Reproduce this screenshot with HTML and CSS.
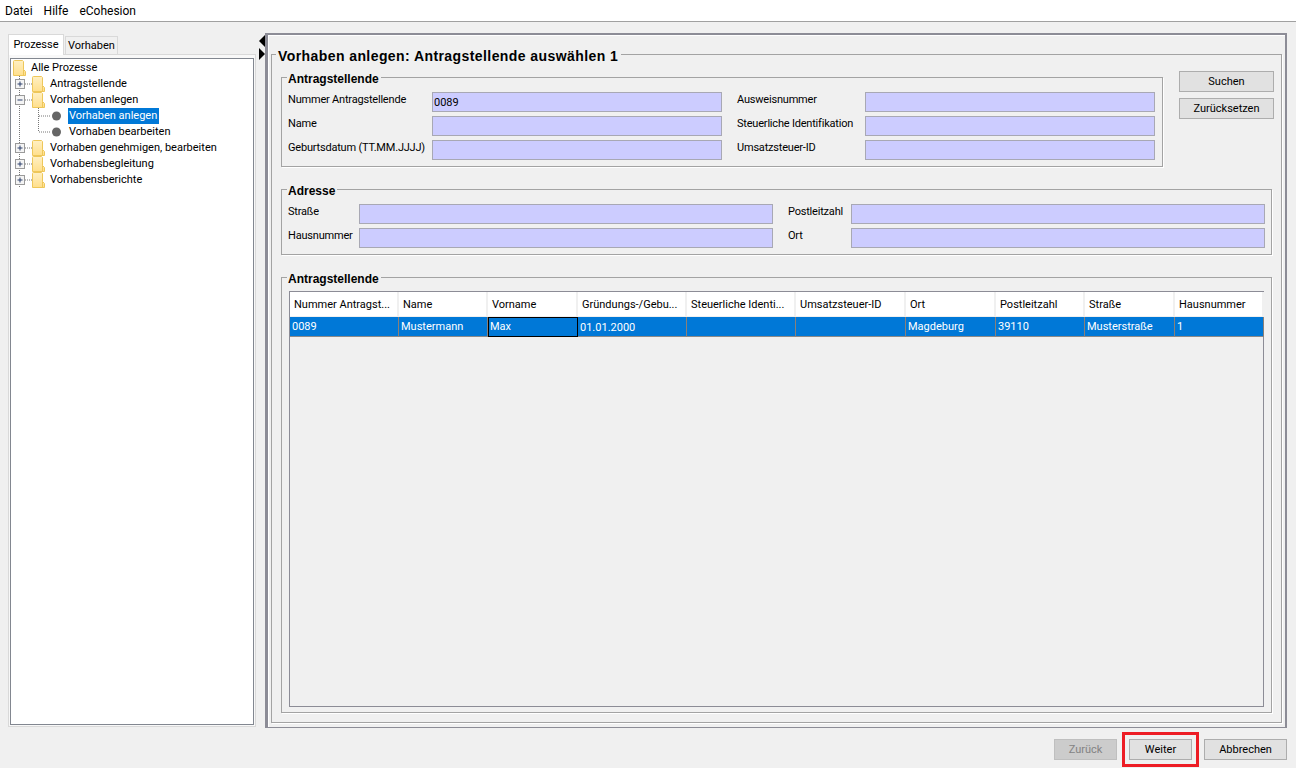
FILE: index.html
```html
<!DOCTYPE html>
<html lang="de">
  <head>
    <meta charset="UTF-8" />
    <meta name="viewport" content="width=device-width, initial-scale=1.0" />
    <title>eCohesion</title>
    <link rel="stylesheet" href="styles.css">
  </head>
  <body>
    <svg class="defs" width="0" height="0">
      <defs>
        <linearGradient id="folder-fill" x1="0" y1="0" x2="0" y2="1">
          <stop offset="0" stop-color="#fff0c4" />
          <stop offset="1" stop-color="#ffdf8c" />
        </linearGradient>
        <symbol id="folder" viewBox="0 0 13 16">
          <path d="M.5 1.5q0-1 1-1h8l1 1v8l2 2v4H.5z" fill="url(#folder-fill)" stroke="#eec75a" />
          <path d="M10.5 9.5v6" stroke="#eec75a" fill="none" />
        </symbol>
        <symbol id="plus" viewBox="0 0 21 16">
          <path d="M8.5 0v16M14 8h7" stroke="#777" stroke-dasharray="1 1" fill="none" />
          <rect x="4.5" y="3.5" width="9" height="9" fill="#f4f4f4" stroke="#9a9a9a" />
          <path d="M6.5 8h5M9 5.5v5" stroke="#2b3f6b" fill="none" />
        </symbol>
        <symbol id="minus" viewBox="0 0 21 16">
          <path d="M8.5 0v16M14 8h7" stroke="#777" stroke-dasharray="1 1" fill="none" />
          <rect x="4.5" y="3.5" width="9" height="9" fill="#f4f4f4" stroke="#9a9a9a" />
          <path d="M6.5 8h5" stroke="#2b3f6b" fill="none" />
        </symbol>
        <symbol id="leaf-mid" viewBox="0 0 52 16">
          <path d="M8.5 0v16M27.5 0v16M28 8h12" stroke="#777" stroke-dasharray="1 1" fill="none" />
          <circle cx="45.5" cy="8" r="4.5" fill="#666" />
        </symbol>
        <symbol id="leaf-end" viewBox="0 0 52 16">
          <path d="M8.5 0v16M27.5 0v8M28 8h12" stroke="#777" stroke-dasharray="1 1" fill="none" />
          <circle cx="45.5" cy="8" r="4.5" fill="#666" />
        </symbol>
      </defs>
    </svg>

    <div class="menubar">
      <span>Datei</span>
      <span>Hilfe</span>
      <span>eCohesion</span>
    </div>

    <div class="main">
      <div class="left-pane">
        <div class="tabs">
          <div class="tab tab-active">Prozesse</div>
          <div class="tab">Vorhaben</div>
        </div>
        <div class="tab-body">
          <div class="tree">
            <div class="tree-row tree-root">
              <svg class="folder"><use href="#folder" /></svg>
              <span class="tree-label">Alle Prozesse</span>
            </div>
            <div class="tree-row">
              <svg class="twisty"><use href="#plus" /></svg>
              <svg class="folder"><use href="#folder" /></svg>
              <span class="tree-label">Antragstellende</span>
            </div>
            <div class="tree-row">
              <svg class="twisty"><use href="#minus" /></svg>
              <svg class="folder"><use href="#folder" /></svg>
              <span class="tree-label">Vorhaben anlegen</span>
            </div>
            <div class="tree-row">
              <svg class="leaf"><use href="#leaf-mid" /></svg>
              <span class="tree-label tree-selected">Vorhaben anlegen</span>
            </div>
            <div class="tree-row">
              <svg class="leaf"><use href="#leaf-end" /></svg>
              <span class="tree-label">Vorhaben bearbeiten</span>
            </div>
            <div class="tree-row">
              <svg class="twisty"><use href="#plus" /></svg>
              <svg class="folder"><use href="#folder" /></svg>
              <span class="tree-label">Vorhaben genehmigen, bearbeiten</span>
            </div>
            <div class="tree-row">
              <svg class="twisty"><use href="#plus" /></svg>
              <svg class="folder"><use href="#folder" /></svg>
              <span class="tree-label">Vorhabensbegleitung</span>
            </div>
            <div class="tree-row">
              <svg class="twisty"><use href="#plus" /></svg>
              <svg class="folder"><use href="#folder" /></svg>
              <span class="tree-label">Vorhabensberichte</span>
            </div>
          </div>
        </div>
      </div>

      <div class="splitter">
        <div class="arrow-left"></div>
        <div class="arrow-right"></div>
      </div>

      <div class="panel">
        <div class="step">
          <div class="step-title">Vorhaben anlegen: Antragstellende auswählen 1</div>

          <div class="search-row">
            <div class="group group-search">
              <div class="group-title">Antragstellende</div>
              <div class="form-grid">
                <label>Nummer Antragstellende</label>
                <input type="text" value="0089" />
                <label>Ausweisnummer</label>
                <input type="text" />
                <label>Name</label>
                <input type="text" />
                <label>Steuerliche Identifikation</label>
                <input type="text" />
                <label>Geburtsdatum (TT.MM.JJJJ)</label>
                <input type="text" />
                <label>Umsatzsteuer-ID</label>
                <input type="text" />
              </div>
            </div>
            <div class="search-buttons">
              <button>Suchen</button>
              <button>Zurücksetzen</button>
            </div>
          </div>

          <div class="group group-address">
            <div class="group-title">Adresse</div>
            <div class="form-grid address-grid">
              <label>Straße</label>
              <input type="text" />
              <label>Postleitzahl</label>
              <input type="text" />
              <label>Hausnummer</label>
              <input type="text" />
              <label>Ort</label>
              <input type="text" />
            </div>
          </div>

          <div class="group group-results">
            <div class="group-title">Antragstellende</div>
            <div class="table-box">
              <table class="results">
                <colgroup>
                  <col class="w109" /><col class="w89" /><col class="w90" /><col class="w109" /><col class="w109" />
                  <col class="w110" /><col class="w90" /><col class="w89" /><col class="w90" /><col class="w89" />
                </colgroup>
                <thead>
                  <tr>
                    <th>Nummer Antragst...</th>
                    <th>Name</th>
                    <th>Vorname</th>
                    <th>Gründungs-/Gebu...</th>
                    <th>Steuerliche Identi...</th>
                    <th>Umsatzsteuer-ID</th>
                    <th>Ort</th>
                    <th>Postleitzahl</th>
                    <th>Straße</th>
                    <th>Hausnummer</th>
                  </tr>
                </thead>
                <tbody>
                  <tr>
                    <td>0089</td>
                    <td>Mustermann</td>
                    <td class="cell-focus">Max</td>
                    <td class="cell-date">01.01.2000</td>
                    <td></td>
                    <td></td>
                    <td>Magdeburg</td>
                    <td>39110</td>
                    <td>Musterstraße</td>
                    <td>1</td>
                  </tr>
                </tbody>
              </table>
            </div>
          </div>
        </div>
      </div>
    </div>

    <div class="footer">
      <button class="btn-nav" disabled>Zurück</button>
      <button class="btn-nav btn-marked">Weiter</button>
      <button class="btn-cancel">Abbrechen</button>
    </div>
  </body>
</html>
```

FILE: styles.css
```css
* {
  box-sizing: border-box;
}
body {
  margin: 0;
  height: 768px;
  overflow: hidden;
  display: flex;
  flex-direction: column;
  background: #f0f0f0;
  color: #000;
  font-family: Roboto, Arial, sans-serif;
  font-size: 11px;
}
.defs {
  position: absolute;
}

/* menu */
.menubar {
  height: 22px;
  flex: none;
  display: flex;
  gap: 11px;
  padding: 3px 0 0 5px;
  background: #fff;
  border-bottom: 1px solid #a0a0a0;
  line-height: 16px;
  font-size: 12px;
}

.main {
  flex: 1;
  display: flex;
  min-height: 0;
  padding: 11px 9px 0 8px;
}

/* left tree */
.left-pane {
  width: 248px;
  flex: none;
  display: flex;
  flex-direction: column;
  margin: 1px 0;
}
.tabs {
  display: flex;
  align-items: flex-end;
  gap: 1px;
  height: 20px;
  flex: none;
  position: relative;
  z-index: 1;
}
.tab {
  height: 18px;
  width: 53px;
  border: 1px solid #d9d9d9;
  border-bottom: 0;
  text-align: center;
  line-height: 18px;
}
.tab-active {
  width: 56px;
  height: 21px;
  margin-bottom: -1px;
  background: #fff;
  line-height: 19px;
}
.tab-body {
  flex: 1;
  min-height: 0;
  padding: 3px 1px 1px 1px;
  border: 1px solid #d9d9d9;
  background: #f8f8f8;
}
.tree {
  height: 100%;
  padding-top: 1px;
  background: #fff;
  border: 1px solid #828790;
}
.tree-row {
  height: 16px;
  display: flex;
  align-items: center;
  line-height: 16px;
  white-space: nowrap;
}
.tree-root {
  padding-left: 2px;
}
.folder {
  width: 13px;
  height: 16px;
  flex: none;
  margin-right: 4px;
}
.twisty {
  width: 21px;
  height: 16px;
  flex: none;
}
.leaf {
  width: 52px;
  height: 16px;
  flex: none;
  margin-right: 5px;
}
.tree-label {
  padding: 0 1px;
}
.tree-selected {
  width: 91px;
  background: #0078d7;
  color: #fff;
}

/* splitter */
.splitter {
  width: 9px;
  flex: none;
  padding: 2px 0 0 3px;
}
.arrow-left,
.arrow-right {
  width: 0;
  height: 0;
  border-top: 6px solid transparent;
  border-bottom: 6px solid transparent;
}
.arrow-left {
  border-right: 6px solid #000;
}
.arrow-right {
  margin-top: 1px;
  border-left: 6px solid #000;
}

/* right panel */
.panel {
  flex: 1;
  min-width: 0;
  padding: 19px 3px 4px 3px;
  border-style: solid;
  border-color: #8c8c96;
  border-width: 2px 2px 1px 3px;
  box-shadow: inset 1px 1px 0 #fff;
}
.step,
.group {
  border: 1px solid #a3a3a3;
  box-shadow: 1px 1px 0 #fff;
}
.step {
  height: 100%;
  display: flex;
  flex-direction: column;
  padding: 0 9px 9px;
}
.step-title {
  width: fit-content;
  margin: -8px 0 0 -5px;
  padding: 0 3px 0 2px;
  background: #f0f0f0;
  font-family: "Liberation Sans", Arial, sans-serif;
  font-size: 14px;
  font-weight: bold;
  line-height: 18px;
  letter-spacing: 0.42px;
}
.search-row {
  display: flex;
  align-items: flex-start;
  gap: 16px;
  margin: 6px -2px 0 0;
}
.group-search {
  width: 882px;
  flex: none;
  margin-top: 6px;
  padding: 0 7px 6px 6px;
}
.group-title {
  width: fit-content;
  margin: -7px 0 0 -1px;
  padding: 0 2px 0 1px;
  background: #f0f0f0;
  font-family: "Liberation Sans", Arial, sans-serif;
  font-size: 12px;
  font-weight: bold;
  line-height: 16px;
}
.form-grid {
  display: grid;
  grid-template-columns: 144px 290px 143px 290px;
  row-gap: 4px;
  margin-top: 5px;
}
.form-grid label {
  line-height: 15px;
  white-space: nowrap;
  letter-spacing: -0.2px;
}
.form-grid label:nth-child(4n + 3) {
  padding-left: 15px;
}
.form-grid input {
  height: 20px;
  min-width: 0;
  padding: 0 1px;
  margin: 0;
  background: #ccccff;
  border: 1px solid #a8a8b4;
  font: inherit;
  color: #000;
  outline: none;
}
.search-buttons {
  display: flex;
  flex-direction: column;
  gap: 6px;
  width: 95px;
  flex: none;
}
button {
  height: 21px;
  margin: 0;
  padding: 0;
  background: #e1e1e1;
  border: 1px solid #adadad;
  font: inherit;
  color: #000;
}
.group-address {
  margin-top: 22px;
  padding: 0 6px 6px 6px;
}
.address-grid {
  grid-template-columns: 71px 414px 78px 414px;
}
.group-results {
  flex: 1;
  min-height: 0;
  display: flex;
  flex-direction: column;
  margin-top: 22px;
  padding: 0 7px 5px 7px;
}
.group-results .group-title {
  margin-left: -2px;
}
.table-box {
  flex: 1;
  min-height: 0;
  margin-top: 4px;
  border: 1px solid #8c8c96;
}
.results {
  width: 974px;
  table-layout: fixed;
  border-collapse: separate;
  border-spacing: 0;
}
.w89 { width: 89px; }
.w90 { width: 90px; }
.w109 { width: 109px; }
.w110 { width: 110px; }
.results th {
  height: 25px;
  padding: 1px 0 0 4px;
  background: #fff;
  border-right: 2px solid #f0f0f0;
  border-bottom: 1px solid #f0f0f0;
  font-weight: normal;
  text-align: left;
  white-space: nowrap;
  overflow: hidden;
}
.results td {
  height: 20px;
  padding: 0 2px 1px;
  background: #0078d7;
  border-right: 1px solid #8a8078;
  border-bottom: 1px solid #8a8a8a;
  color: #fff;
  white-space: nowrap;
  overflow: hidden;
}
.results td.cell-focus {
  outline: 1px solid #000;
  outline-offset: -1px;
}
.results td.cell-date {
  padding: 1px 2px 0;
}

/* footer */
.footer {
  height: 40px;
  flex: none;
  display: flex;
  justify-content: flex-end;
  gap: 12px;
  padding: 11px 9px 0 0;
}
.btn-nav {
  width: 63px;
}
.btn-cancel {
  width: 83px;
}
.btn-nav:disabled {
  background: #cccccc;
  border-color: #bfbfbf;
  color: #838383;
}
.btn-marked {
  outline: 3px solid #ed1c24;
  outline-offset: 4px;
}
```
